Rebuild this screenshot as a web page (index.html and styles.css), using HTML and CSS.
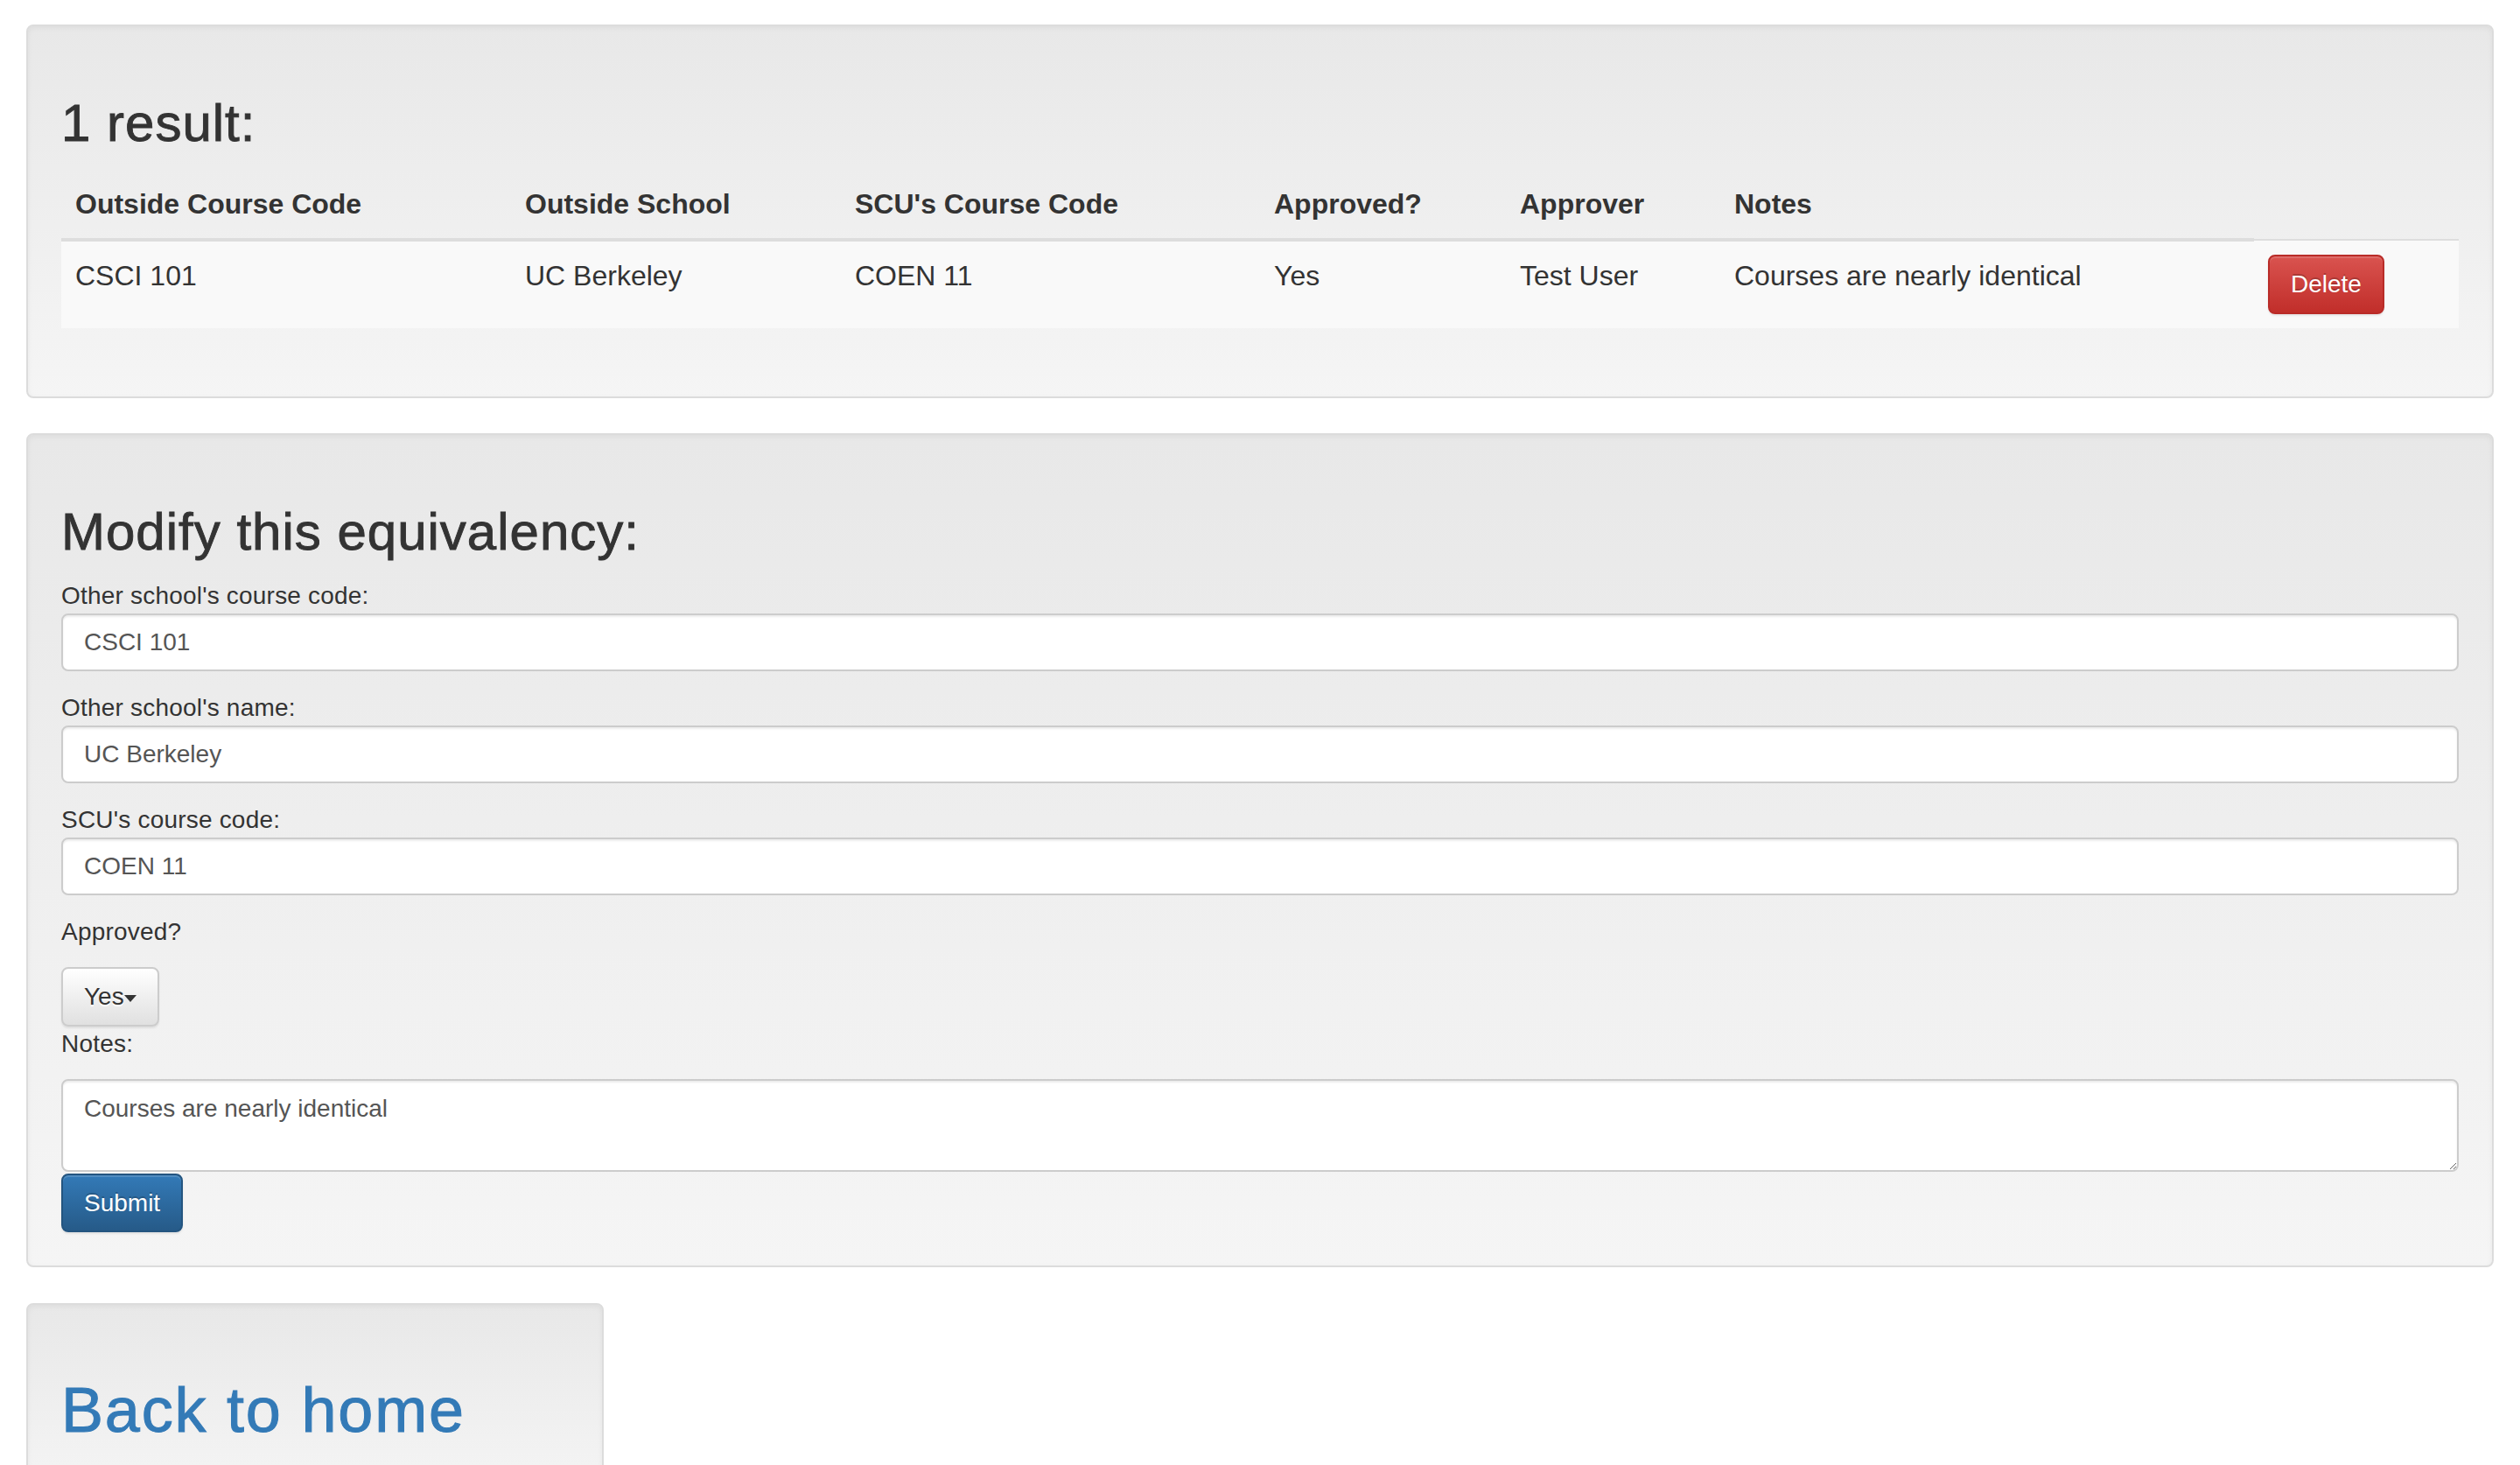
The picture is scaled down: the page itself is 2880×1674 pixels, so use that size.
FILE: index.html
```html
<!DOCTYPE html>
<html lang="en">
<head>
<meta charset="utf-8">
<title>Equivalency</title>
<link rel="stylesheet" href="styles.css">
</head>
<body>
<div class="page">
  <div class="well">
    <h2 class="title">1 result:</h2>
    <table class="results">
      <colgroup>
        <col class="c1"><col class="c2"><col class="c3"><col class="c4"><col class="c5"><col class="c6"><col class="c7">
      </colgroup>
      <thead>
        <tr>
          <th>Outside Course Code</th>
          <th>Outside School</th>
          <th>SCU's Course Code</th>
          <th>Approved?</th>
          <th>Approver</th>
          <th>Notes</th>
        </tr>
      </thead>
      <tbody>
        <tr>
          <td>CSCI 101</td>
          <td>UC Berkeley</td>
          <td>COEN 11</td>
          <td>Yes</td>
          <td>Test User</td>
          <td>Courses are nearly identical</td>
          <td><button class="btn btn-danger" type="button">Delete</button></td>
        </tr>
      </tbody>
    </table>
  </div>

  <div class="well well-form">
    <h2 class="title">Modify this equivalency:</h2>
    <form class="form">
      <label class="field-label">Other school's course code:</label>
      <input class="control" type="text" value="CSCI 101">
      <label class="field-label">Other school's name:</label>
      <input class="control" type="text" value="UC Berkeley">
      <label class="field-label">SCU's course code:</label>
      <input class="control" type="text" value="COEN 11">
      <label class="field-label spaced">Approved?</label>
      <div class="dropdown">
        <button class="btn btn-default" type="button">Yes<span class="caret"></span></button>
      </div>
      <label class="field-label spaced">Notes:</label>
      <textarea class="control area">Courses are nearly identical</textarea>
      <div class="actions">
        <button class="btn btn-primary" type="button">Submit</button>
      </div>
    </form>
  </div>

  <div class="well well-home">
    <h1 class="home-title"><a class="home-link" href="#">Back to home</a></h1>
  </div>
</div>
</body>
</html>
```

FILE: styles.css
```css
html, body {
  margin: 0;
  padding: 0;
  background: #fff;
}

body {
  font-family: "Liberation Sans", Arial, sans-serif;
  font-size: 28px;
  line-height: 40px;
  color: #333;
}

.page {
  padding: 28px 30px 0;
}

.well {
  box-sizing: border-box;
  border: 2px solid #dcdcdc;
  border-radius: 8px;
  padding: 38px;
  margin-bottom: 40px;
  background: linear-gradient(to bottom, #e8e8e8 0%, #f5f5f5 100%);
  box-shadow: inset 0 2px 6px rgba(0, 0, 0, 0.05), 0 2px 0 rgba(255, 255, 255, 0.1);
}

.well-form {
  margin-bottom: 41px;
}

.well-home {
  width: 660px;
}

.title {
  font-size: 60px;
  line-height: 66px;
  font-weight: normal;
  letter-spacing: 1px;
  -webkit-text-stroke: 0.9px #333;
  margin: 40px 0 20px;
  color: #333;
}

.results {
  width: 100%;
  table-layout: fixed;
  border-collapse: collapse;
  border-spacing: 0;
  margin-bottom: 40px;
  font-size: 32px;
  line-height: 46px;
}

.c1 { width: 514px; }
.c2 { width: 377px; }
.c3 { width: 479px; }
.c4 { width: 281px; }
.c5 { width: 245px; }
.c6 { width: 610px; }
.c7 { width: 234px; }

.results th {
  text-align: left;
  font-weight: bold;
  padding: 16px;
  line-height: 46px;
  vertical-align: bottom;
  border-bottom: 4px solid #ddd;
}

.results td {
  padding: 16px;
  line-height: 46px;
  vertical-align: top;
  border-top: 2px solid #ddd;
  background: #f9f9f9;
}

.btn {
  display: inline-block;
  box-sizing: border-box;
  font-family: "Liberation Sans", Arial, sans-serif;
  font-size: 28px;
  line-height: 40px;
  padding: 12px 24px;
  border: 2px solid transparent;
  border-radius: 8px;
  cursor: pointer;
  vertical-align: middle;
  white-space: nowrap;
}

.btn-danger {
  height: 68px;
  color: #fff;
  background: linear-gradient(to bottom, #d9534f 0%, #c12e2a 100%);
  border-color: #b92c28;
  text-shadow: 0 -2px 0 rgba(0, 0, 0, 0.2);
  box-shadow: inset 0 2px 0 rgba(255, 255, 255, 0.15), 0 2px 2px rgba(0, 0, 0, 0.075);
}

.btn-primary {
  height: 67px;
  line-height: 39px;
  color: #fff;
  background: linear-gradient(to bottom, #337ab7 0%, #265a88 100%);
  border-color: #245580;
  text-shadow: 0 -2px 0 rgba(0, 0, 0, 0.2);
  box-shadow: inset 0 2px 0 rgba(255, 255, 255, 0.15), 0 2px 2px rgba(0, 0, 0, 0.075);
}

.btn-default {
  height: 68px;
  line-height: 40px;
  color: #333;
  background: linear-gradient(to bottom, #fff 0%, #e0e0e0 100%);
  border-color: #ccc;
  text-shadow: 0 2px 0 #fff;
  box-shadow: inset 0 2px 0 rgba(255, 255, 255, 0.15), 0 2px 2px rgba(0, 0, 0, 0.075);
}

.caret {
  display: inline-block;
  width: 0;
  height: 0;
  margin-left: 0;
  vertical-align: middle;
  border-top: 8px solid #333;
  border-left: 7px solid transparent;
  border-right: 7px solid transparent;
}

.form {
  margin: 0;
}

.field-label {
  display: block;
  line-height: 40px;
  margin: 0;
  color: #333;
  font-weight: normal;
  letter-spacing: 0.2px;
}

.field-label.spaced {
  margin-bottom: 20px;
}

.control {
  display: block;
  box-sizing: border-box;
  width: 100%;
  height: 66px;
  margin: 0 0 22px;
  padding: 12px 24px;
  font-family: "Liberation Sans", Arial, sans-serif;
  font-size: 28px;
  line-height: 40px;
  color: #555;
  background: #fff;
  border: 2px solid #ccc;
  border-radius: 8px;
  box-shadow: inset 0 2px 2px rgba(0, 0, 0, 0.075);
  outline: none;
}

.control.area {
  height: 106px;
  margin-bottom: 2px;
  resize: both;
}

.dropdown {
  margin: 0;
}

.actions {
  line-height: 0;
}

.home-title {
  font-size: 72px;
  line-height: 79px;
  font-weight: normal;
  letter-spacing: 1.8px;
  -webkit-text-stroke: 1px #337ab7;
  margin: 43px 0 20px;
}

.home-link {
  color: #337ab7;
  text-decoration: none;
}
```
